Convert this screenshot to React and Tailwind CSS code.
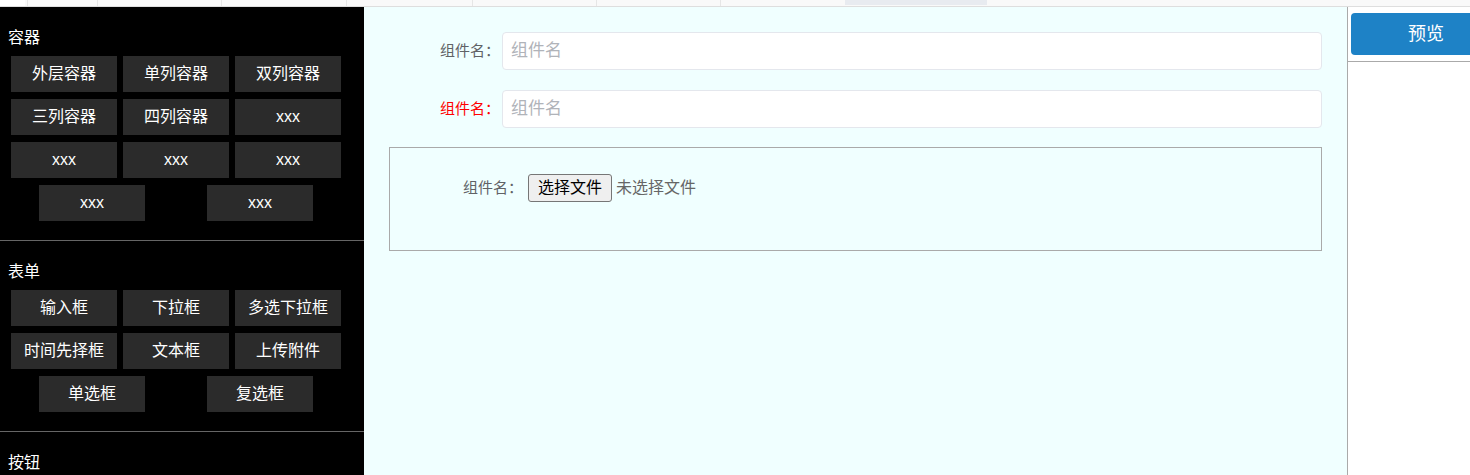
import React from 'react';

const FONT = 'font-["Liberation_Sans","Noto_Sans_CJK_SC",sans-serif]';

const sections = [
  { title: '容器', items: ['外层容器', '单列容器', '双列容器', '三列容器', '四列容器', 'xxx', 'xxx', 'xxx', 'xxx', 'xxx', 'xxx'] },
  { title: '表单', items: ['输入框', '下拉框', '多选下拉框', '时间先择框', '文本框', '上传附件', '单选框', '复选框'] },
  { title: '按钮', items: [] },
];

// tab cell widths between the thin separators of the top strip
const tabCells = ['w-[69px]', 'w-[123px]', 'w-[124px]', 'w-[125px]', 'w-[123px]', 'w-[123px]'];

const TopStrip = () => (
  <div className="h-[7px] bg-[#f9f9f9] border-b border-[#dedede] flex">
    <div className="w-[25px] h-[6px] bg-white" />
    <div className="w-[2px]" />
    <div className="w-px h-[6px] bg-[#e6e6e6]" />
    {tabCells.map((w, i) => (
      <div key={i} className="flex">
        <div className={w} />
        <div className="w-px h-[6px] bg-[#e6e6e6]" />
      </div>
    ))}
    <div className="w-[124px]" />
    <div className="w-[142px] h-[5px] bg-[#e8ebf0]" />
  </div>
);

const Sidebar = () => (
  <div className="w-[364px] shrink-0 bg-black text-white">
    {sections.map((s, i) => (
      <div key={s.title} className={i < sections.length - 1 ? 'border-b border-[#666] pb-[19px]' : ''}>
        <div className="pt-[20px] pl-2 text-[16px] leading-[22px]">{s.title}</div>
        {s.items.length > 0 && (
          <div className="ml-2 mt-[7px] w-[336px] flex flex-wrap justify-around gap-y-[7px]">
            {s.items.map((it, j) => (
              <div key={j} className="w-[106px] h-9 bg-[#2b2b2b] flex items-center justify-center text-[16px]">
                {it}
              </div>
            ))}
          </div>
        )}
      </div>
    ))}
  </div>
);

const InputRow = ({ red }) => (
  <div className="flex items-center">
    <label className={`w-[113px] shrink-0 text-right text-[15px] pr-[2px] ${red ? 'text-[#ff0000]' : 'text-[#606266]'}`}>
      组件名：
    </label>
    <input
      placeholder="组件名"
      className="flex-1 h-[38px] bg-white border border-[#e4e7ed] rounded-[4px] px-2 text-[17px] outline-none placeholder:text-[#b0b3b9]"
    />
  </div>
);

export default function App() {
  return (
    <div className={`${FONT} h-[475px] w-[1470px] overflow-hidden flex flex-col bg-white`}>
      <TopStrip />
      <div className="flex flex-1 min-h-0">
        <Sidebar />
        <div className="flex-1 bg-[#f0ffff] px-[25px] pt-[25px]">
          <div className="flex flex-col gap-[20px]">
            <InputRow />
            <InputRow red />
          </div>
          <div className="mt-[19px] h-[104px] border border-[#aaa] pt-[26px] pl-[73px] flex items-start">
            <span className="text-[15px] text-[#606266] leading-[28px] w-[65px]">组件名：</span>
            <span className="h-[28px] px-[9px] bg-[#efefef] border border-[#767676] rounded-[3px] text-[16px] text-black leading-[26px]">
              选择文件
            </span>
            <span className="ml-[4px] text-[16px] text-[#666] leading-[28px]">未选择文件</span>
          </div>
        </div>
        <div className="w-[123px] shrink-0 border-l border-[#aaa] overflow-hidden">
          <div className="pt-[6px] pl-[3px]">
            <div className="w-[150px] h-[42px] rounded-[4px] bg-[#1e82c6] text-white text-[18px] flex items-center justify-center">
              预览
            </div>
          </div>
          <div className="mt-[6px] border-t border-[#aaa]" />
        </div>
      </div>
    </div>
  );
}
